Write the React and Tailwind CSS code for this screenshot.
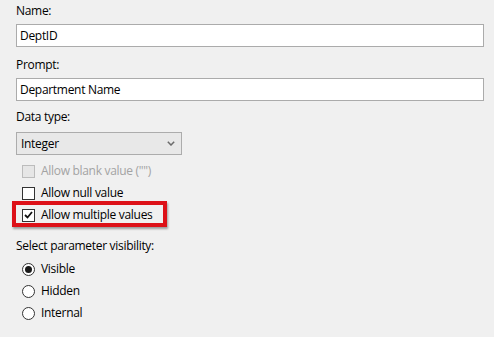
const font = { fontFamily: '"Segoe UI", "Open Sans", "Noto Sans", sans-serif' };

const Label = ({ children, className = "" }) => (
  <div className={`h-4 text-[12px] leading-4 tracking-[-0.3px] text-black ${className}`}>{children}</div>
);

const TextBox = ({ value, className = "" }) => (
  <div className={`flex h-[23px] w-[468px] items-center border border-[#ababab] bg-white pl-[3px] text-[12px] tracking-[-0.3px] text-black ${className}`}>
    {value}
  </div>
);

const CheckBox = ({ checked, disabled }) => (
  <span
    className={`flex h-[13px] w-[13px] items-center justify-center border ${
      disabled ? "border-[#bcbcbc] bg-[#e6e6e6]" : "border-[#333333] bg-white"
    }`}
  >
    {checked && (
      <svg width="9" height="8" viewBox="0 0 9 8">
        <path d="M1 4 L3.5 6.5 L8 1" fill="none" stroke="#111" strokeWidth="1.8" />
      </svg>
    )}
  </span>
);

const CheckRow = ({ label, checked, disabled, children }) => (
  <div className="relative flex h-[22px] items-center gap-[6px] pl-[6px] text-[12px] tracking-[-0.3px]">
    {children}
    <CheckBox checked={checked} disabled={disabled} />
    <span className={`relative ${disabled ? "text-[#a3a3a3]" : "text-black"}`}>{label}</span>
  </div>
);

const Radio = ({ label, selected }) => (
  <div className="flex h-[22px] items-center gap-[6px] pl-[6px] text-[12px] tracking-[-0.3px] text-black">
    <span className="flex h-[13px] w-[13px] items-center justify-center rounded-full border border-[#333333] bg-white">
      {selected && <span className="h-[7px] w-[7px] rounded-full bg-[#1a1a1a]" />}
    </span>
    <span>{label}</span>
  </div>
);

export default function App() {
  return (
    <div className="h-[337px] w-[494px] overflow-hidden bg-[#f0f0f0] pl-4" style={font}>
      <Label className="pt-[3px] h-[19px]">Name:</Label>
      <TextBox value="DeptID" className="mt-[5px]" />

      <Label className="mt-[10px]">Prompt:</Label>
      <TextBox value="Department Name" className="mt-[5px]" />

      <Label className="mt-[8px]">Data type:</Label>
      <div className="mt-[7px] flex h-[23px] w-[166px] items-center justify-between border border-[#acacac] bg-[#e8e8e8] pl-[4px] pr-[6px] text-[12px] tracking-[-0.3px] text-black">
        <span>Integer</span>
        <svg width="8" height="5" viewBox="0 0 8 5">
          <path d="M0.8 0.8 L4 4 L7.2 0.8" fill="none" stroke="#6b6b6b" strokeWidth="1.5" />
        </svg>
      </div>

      <div className="mt-[5px]">
        <CheckRow label={'Allow blank value ("")'} disabled />
        <CheckRow label="Allow null value" />
        <CheckRow label="Allow multiple values" checked>
          <span className="absolute left-[-4px] top-[-3px] h-[26px] w-[155px] border-[4px] border-[#dd1118] shadow-[1px_2px_2px_rgba(0,0,0,0.35)]" />
        </CheckRow>
      </div>

      <Label className="mt-[12px]">Select parameter visibility:</Label>
      <div className="mt-[4px]">
        <Radio label="Visible" selected />
        <Radio label="Hidden" />
        <Radio label="Internal" />
      </div>
    </div>
  );
}
